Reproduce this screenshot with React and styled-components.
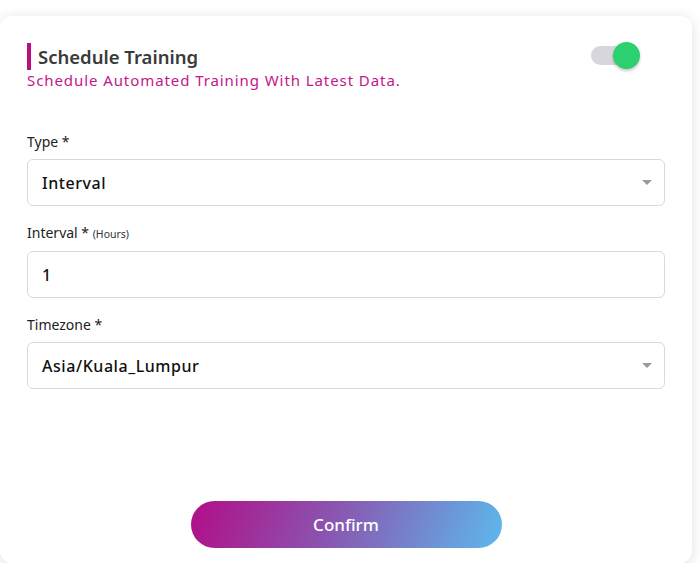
import React, { useState } from 'react';
import styled, { createGlobalStyle } from 'styled-components';

const GlobalStyle = createGlobalStyle`
  body {
    margin: 0;
    background: #fff;
    font-family: 'Noto Sans', 'Open Sans', sans-serif;
  }
`;

const Card = styled.div`
  box-sizing: border-box;
  margin: 16px 0 0 0;
  width: 692px;
  height: 547px;
  background: #fff;
  border-radius: 12px;
  box-shadow: 0 2px 14px rgba(0, 0, 0, 0.13);
  padding: 27px 27px 15px 27px;
  display: flex;
  flex-direction: column;
`;

const HeaderRow = styled.div`
  display: flex;
  align-items: flex-start;
  justify-content: space-between;
`;

const TitleBlock = styled.div`
  display: flex;
  flex-direction: column;
`;

const Title = styled.h2`
  margin: 0;
  border-left: 4px solid #b8117f;
  padding-left: 7px;
  height: 27px;
  line-height: 27px;
  font-size: 18.5px;
  font-weight: 600;
  color: #3a3a3a;
`;

const Subtitle = styled.p`
  margin: 0;
  font-size: 15px;
  line-height: 20px;
  color: #c4168c;
  letter-spacing: 0.92px;
`;

const Switch = styled.button`
  position: relative;
  margin: 3px 32px 0 0;
  width: 42px;
  height: 19px;
  border: none;
  padding: 0;
  border-radius: 10px;
  background: #d6d6dc;
  cursor: pointer;

  &::after {
    content: '';
    position: absolute;
    top: -4px;
    left: ${({ on }) => (on ? '22px' : '-4px')};
    width: 27px;
    height: 27px;
    border-radius: 50%;
    background: ${({ on }) => (on ? '#2dd06e' : '#f4f4f4')};
    box-shadow: 0 2px 3px rgba(0, 0, 0, 0.22);
  }
`;

const Form = styled.div`
  margin-top: 42px;
  display: flex;
  flex-direction: column;
  gap: 17px;
`;

const Field = styled.div`
  display: flex;
  flex-direction: column;
  gap: 7px;
`;

const Label = styled.label`
  font-size: 14px;
  line-height: 20px;
  color: #222;
`;

const Hint = styled.span`
  font-size: 10.5px;
  color: #333;
`;

const Box = styled.div`
  box-sizing: border-box;
  height: 47px;
  border: 1px solid #d9d9d9;
  border-radius: 6px;
  display: flex;
  align-items: center;
  justify-content: space-between;
  padding: 0 12px 0 14px;
  font-size: 16px;
  font-weight: 500;
  letter-spacing: 0.55px;
  color: #111;
`;

const Arrow = styled.span`
  width: 0;
  height: 0;
  border-left: 5.5px solid transparent;
  border-right: 5.5px solid transparent;
  border-top: 5px solid #9a9a9a;
`;

const Footer = styled.div`
  margin-top: auto;
  display: flex;
  justify-content: center;
`;

const ConfirmButton = styled.button`
  width: 311px;
  height: 47px;
  border: none;
  border-radius: 24px;
  background: linear-gradient(110deg, #b20d88 0%, #8a55b0 45%, #5cb9ec 100%);
  color: #fff;
  font-family: inherit;
  font-size: 17px;
  font-weight: 500;
  cursor: pointer;
`;

const SelectBox = ({ value }) => (
  <Box>
    {value}
    <Arrow />
  </Box>
);

export default function App() {
  const [on, setOn] = useState(true);
  return (
    <>
      <GlobalStyle />
      <Card>
        <HeaderRow>
          <TitleBlock>
            <Title>Schedule Training</Title>
            <Subtitle>Schedule Automated Training With Latest Data.</Subtitle>
          </TitleBlock>
          <Switch on={on} onClick={() => setOn(!on)} />
        </HeaderRow>
        <Form>
          <Field>
            <Label>Type *</Label>
            <SelectBox value="Interval" />
          </Field>
          <Field>
            <Label>
              Interval * <Hint>(Hours)</Hint>
            </Label>
            <Box>1</Box>
          </Field>
          <Field>
            <Label>Timezone *</Label>
            <SelectBox value="Asia/Kuala_Lumpur" />
          </Field>
        </Form>
        <Footer>
          <ConfirmButton>Confirm</ConfirmButton>
        </Footer>
      </Card>
    </>
  );
}
